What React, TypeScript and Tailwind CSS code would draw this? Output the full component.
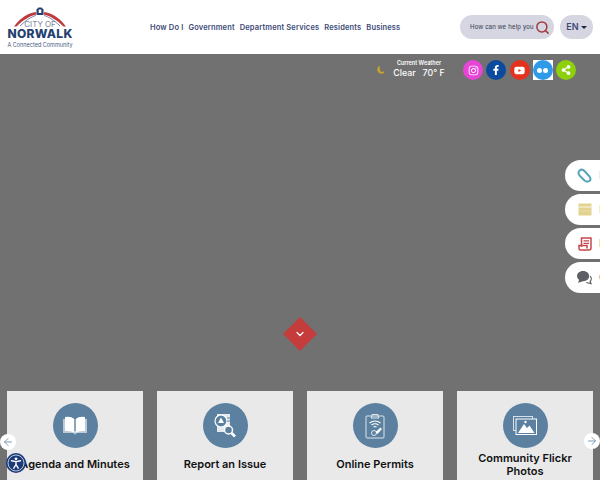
import React from "react";
import { Search, ChevronDown, ArrowLeft, ArrowRight } from "lucide-react";
import { FaInstagram, FaFacebookF, FaYoutube, FaShareAlt } from "react-icons/fa";

const nav = ["How Do I", "Government", "Department Services", "Residents", "Business"];

function Logo() {
  return (
    <div className="flex w-[68px] flex-col items-center" style={{ fontFamily: "Inter, sans-serif" }}>
      <svg width="56" height="20" viewBox="0 0 56 20" className="-mb-[7px]">
        <path d="M2 19.500 C9 10 17 6 24 5 L24 7.500 C18 9 11 13 4.500 19.500 Z" fill="#bf3a3f" />
        <path d="M54 19.500 C47 10 39 6 32 5 L32 7.500 C38 9 45 13 51.500 19.500 Z" fill="#bf3a3f" />
        <path d="M8 19 C14 13 20 9.500 24 8.500 M48 19 C42 13 36 9.500 32 8.500" fill="none" stroke="#24406f" strokeWidth="0.600" />
        <path d="M24.500 2.500 L26.500 0.500 L29.500 0.500 L31.500 2.500 L31.500 8 L24.500 8 Z" fill="#24406f" />
        <rect x="26.700" y="2.500" width="2.600" height="3.500" fill="#ffffff" />
      </svg>
      <span className="text-[8px] leading-[8px] font-light text-[#4a5a80]">CITY OF</span>
      <span className="text-[12px] leading-[12px] font-extrabold tracking-[0.3px] text-[#24406f]">NORWALK</span>
      <span className="mt-[2px] text-[5.500px] leading-[6px] text-[#4a5a80]">A Connected Community</span>
    </div>
  );
}

function Header() {
  return (
    <header className="flex h-[54px] shrink-0 items-center bg-white pl-[6px] pr-[7px]" style={{ fontFamily: "Inter, sans-serif" }}>
      <Logo />
      <nav className="ml-[76px] mt-[1px] flex gap-[5px] text-[7.500px] font-semibold tracking-[0.15px] text-[#3c4a78]">
        {nav.map((item) => (
          <a key={item} className="whitespace-nowrap">{item}</a>
        ))}
      </nav>
      <div className="ml-auto flex items-center gap-[6px]">
        <div className="flex h-[24px] w-[94px] items-center justify-between rounded-full bg-[#d5d6e1] pl-[10px] pr-[4px]">
          <span className="whitespace-nowrap text-[6.300px] tracking-[0.2px] text-[#33384f]" style={{ fontFamily: "Liberation Sans, sans-serif" }}>How can we help you</span>
          <Search size={15} strokeWidth={2.400} className="shrink-0 text-[#a33a40]" />
        </div>
        <div className="flex h-[24px] w-[33px] items-center justify-center gap-[2px] rounded-full bg-[#d5d6e1] text-[9px] font-semibold text-[#3c4a78]">
          EN
          <span className="mt-[1px] h-0 w-0 border-x-[3px] border-t-[3px] border-x-transparent border-t-[#20263d]" />
        </div>
      </div>
    </header>
  );
}

function Social({ bg, children }: { bg: string; children: React.ReactNode }) {
  return <div className={`flex h-[20px] w-[20px] items-center justify-center rounded-full text-white ${bg}`}>{children}</div>;
}

function WeatherBar() {
  return (
    <div className="flex h-[32px] shrink-0 items-center justify-end pr-[24px]" style={{ fontFamily: "Inter, sans-serif" }}>
      <svg width="9" height="9" viewBox="0 0 9 9" className="mr-[8px]">
        <path d="M3 1 A3.500 3.500 0 1 0 8 6 L5.500 7 Q3 5.500 3 1 Z" fill="none" stroke="#c9a227" strokeWidth="1.400" />
      </svg>
      <div className="mr-[18px] -mt-[2px] flex w-[52px] flex-col items-center text-white">
        <span className="whitespace-nowrap text-[5.500px] leading-[8px] font-semibold">Current Weather</span>
        <span className="whitespace-pre text-[8.800px] leading-[12px] font-medium">Clear   70° F</span>
      </div>
      <div className="flex gap-[3.250px]">
        <Social bg="bg-[#e844d8]"><FaInstagram size={11} /></Social>
        <Social bg="bg-[#0b4a9e]"><FaFacebookF size={10} /></Social>
        <Social bg="bg-[#e5321f]"><FaYoutube size={11} /></Social>
        <div className="bg-white">
          <Social bg="bg-[#2f9be8]">
            <span className="flex gap-[1px]">
              <span className="h-[5px] w-[5px] rounded-full bg-white" />
              <span className="h-[5px] w-[5px] rounded-full bg-white" />
            </span>
          </Social>
        </div>
        <Social bg="bg-[#8ed00c]"><FaShareAlt size={10} /></Social>
      </div>
    </div>
  );
}

function BookIcon() {
  return (
    <svg width="26" height="20" viewBox="0 0 26 20">
      <path d="M1 3 L1 17 L11 17 Q12.500 17.500 13 19 Q13.500 17.500 15 17 L25 17 L25 3 L23 3 L23 15 L3 15 L3 3 Z" fill="#b9cbd8" />
      <path d="M3 1 Q9 0 12.300 3 L12.300 17 Q9 14.500 3 15 Z" fill="#ffffff" />
      <path d="M23 1 Q17 0 13.700 3 L13.700 17 Q17 14.500 23 15 Z" fill="#ffffff" />
    </svg>
  );
}

function ReportIcon() {
  return (
    <svg width="24" height="26" viewBox="0 0 24 26">
      <path d="M4 1 L17 1 L17 14 L13 19 L4 19 Z" fill="#e4ebf0" />
      <circle cx="8" cy="8" r="6" fill="#5b80a0" stroke="#ffffff" strokeWidth="1.200" />
      <path d="M8 4.500 L11 10 L5 10 Z" fill="#ffffff" />
      <path d="M14 5 H17 M14 8 H17" stroke="#5b80a0" strokeWidth="1" />
      <circle cx="15.500" cy="17" r="4" fill="#5b80a0" stroke="#ffffff" strokeWidth="1.500" />
      <path d="M18.500 20 L22 23.500" stroke="#ffffff" strokeWidth="2.600" />
    </svg>
  );
}

function PermitIcon() {
  return (
    <svg width="20" height="26" viewBox="0 0 20 26" fill="none" stroke="#ffffff" strokeWidth="0.800">
      <rect x="1" y="3" width="18" height="22" rx="1" />
      <path d="M7 3 L7 1.500 L13 1.500 L13 3 L14 5 L6 5 Z" />
      <path d="M4.500 10 Q10 6 15.500 10 M6.500 12 Q10 9.500 13.500 12 M8.500 14 Q10 13 11.500 14" strokeWidth="1.100" />
      <path d="M11 19 L15.500 15 L16.500 16 L12.500 20.500 Z" fill="#ffffff" />
      <circle cx="9" cy="20" r="2.500" />
    </svg>
  );
}

function PhotosIcon() {
  return (
    <svg width="24" height="19" viewBox="0 0 24 19">
      <rect x="0.500" y="0.500" width="19" height="14" fill="none" stroke="#d5e0e8" strokeWidth="1" />
      <rect x="3" y="3" width="20.500" height="15.500" fill="#5b80a0" stroke="#ffffff" strokeWidth="1" />
      <path d="M5 17 L11 8 L14 12 L16.500 9.500 L21.500 17 Z" fill="#ffffff" />
      <circle cx="12.500" cy="6" r="1.200" fill="#ffffff" />
    </svg>
  );
}

const cards = [
  { title: "Agenda and Minutes", icon: <BookIcon /> },
  { title: "Report an Issue", icon: <ReportIcon /> },
  { title: "Online Permits", icon: <PermitIcon /> },
  { title: "Community Flickr Photos", icon: <PhotosIcon /> },
];

function SideTab({ label, color, children }: { label: string; color: string; children: React.ReactNode }) {
  return (
    <div className="flex h-[31px] w-[35px] items-center gap-[7px] overflow-hidden rounded-l-full bg-white pl-[12px]">
      <span className="flex w-[15px] shrink-0 justify-center">{children}</span>
      <span className={`whitespace-nowrap text-[10px] ${color}`}>{label}</span>
    </div>
  );
}

export default function App() {
  return (
    <div className="relative h-[480px] w-[600px] overflow-hidden bg-[#717171]">
      <Header />
      <main className="flex h-[426px] flex-col overflow-hidden">
        <WeatherBar />
        <div className="mt-[305px] flex shrink-0 gap-[14px] px-[7px]">
          {cards.map((card) => (
            <div key={card.title} className="flex h-[120px] w-[136px] flex-col items-center bg-[#e9e9e9] pt-[12px]">
              <div className="flex h-[45px] w-[45px] items-center justify-center rounded-full bg-[#5b80a0]">{card.icon}</div>
              <div className="mt-[3px] flex h-[28px] w-full items-center justify-center px-[10px] text-center text-[11px] leading-[13.500px] font-semibold text-[#111111]" style={{ fontFamily: "Inter, sans-serif" }}>
                {card.title}
              </div>
            </div>
          ))}
        </div>
      </main>

      {/* floating side tabs */}
      <div className="absolute right-0 top-[160px] flex flex-col gap-[3px]" style={{ fontFamily: "Inter, sans-serif" }}>
        <SideTab label="Links" color="text-[#5aa5b8]">
          <svg width="15" height="15" viewBox="0 0 15 15" fill="none" stroke="#5aa5b8" strokeWidth="2">
            <path d="M2.500 2.500 Q5 0.500 7.500 3 L12.500 8.500 Q14.500 11 12.500 13 Q10 14.500 7.500 12.500 L2.500 7.500 Q0.500 5 2.500 2.500 Z" />
          </svg>
        </SideTab>
        <SideTab label="Events" color="text-[#bfae70]">
          <svg width="14" height="13" viewBox="0 0 14 13">
            <rect x="0.500" y="0.500" width="13" height="12" fill="#e3d391" />
            <path d="M0.500 4 H13.500" stroke="#ffffff" strokeWidth="0.800" />
            <path d="M0.500 8 H13.500" stroke="#efe4b8" strokeWidth="0.600" />
          </svg>
        </SideTab>
        <SideTab label="News" color="text-[#c8474b]">
          <svg width="14" height="14" viewBox="0 0 14 14" fill="none" stroke="#c8474b" strokeWidth="1.500">
            <path d="M3.500 10 V1 H13 V11 Q13 13 11 13 H2.500 Q1 13 1 11.500 V8.500 H9 V11.500" />
            <path d="M5.500 3.800 H11 M5.500 6.300 H11" strokeWidth="1.200" />
          </svg>
        </SideTab>
        <SideTab label="Chat" color="text-[#666666]">
          <svg width="16" height="15" viewBox="0 0 16 15">
            <path d="M6.500 0.500 C10.500 0.500 13 3 13 6 C13 9 10.500 11.500 6.500 11.500 L1 13 L2.300 10 C0.800 9 0 7.500 0 6 C0 3 2.500 0.500 6.500 0.500 Z" fill="#5c5f63" />
            <path d="M14 6 C15.500 7.500 15.800 10 14 11.500 L15 14 L10 12.800" fill="none" stroke="#5c5f63" strokeWidth="1.200" />
          </svg>
        </SideTab>
      </div>

      {/* scroll-down diamond */}
      <div className="absolute left-[288px] top-[322px] flex h-[24px] w-[24px] rotate-45 items-center justify-center bg-[#c43c3c]">
        <ChevronDown size={12} strokeWidth={2.400} className="-rotate-45 text-[#ffffff]" />
      </div>

      {/* carousel arrows */}
      <div className="absolute left-0 top-[434px] flex h-[16px] w-[16px] items-center justify-center rounded-full bg-white">
        <ArrowLeft size={12} className="text-[#7d9cb5]" />
      </div>
      <div className="absolute right-0 top-[433px] flex h-[16px] w-[16px] items-center justify-center rounded-full bg-white">
        <ArrowRight size={12} className="text-[#7d9cb5]" />
      </div>

      {/* accessibility widget */}
      <div className="absolute left-[6px] top-[453px] flex h-[20px] w-[20px] items-center justify-center rounded-full bg-[#1b3a78]">
        <svg width="18" height="18" viewBox="0 0 18 18">
          <circle cx="9" cy="9" r="8" fill="none" stroke="#ffffff" strokeWidth="0.700" />
          <circle cx="9" cy="4.800" r="1.400" fill="#ffffff" />
          <path d="M4.500 6.800 L9 7.600 L13.500 6.800 M9 7.600 V10.500 M9 10.500 L6.800 14.200 M9 10.500 L11.200 14.200" fill="none" stroke="#ffffff" strokeWidth="1.400" strokeLinecap="round" />
        </svg>
      </div>
    </div>
  );
}
